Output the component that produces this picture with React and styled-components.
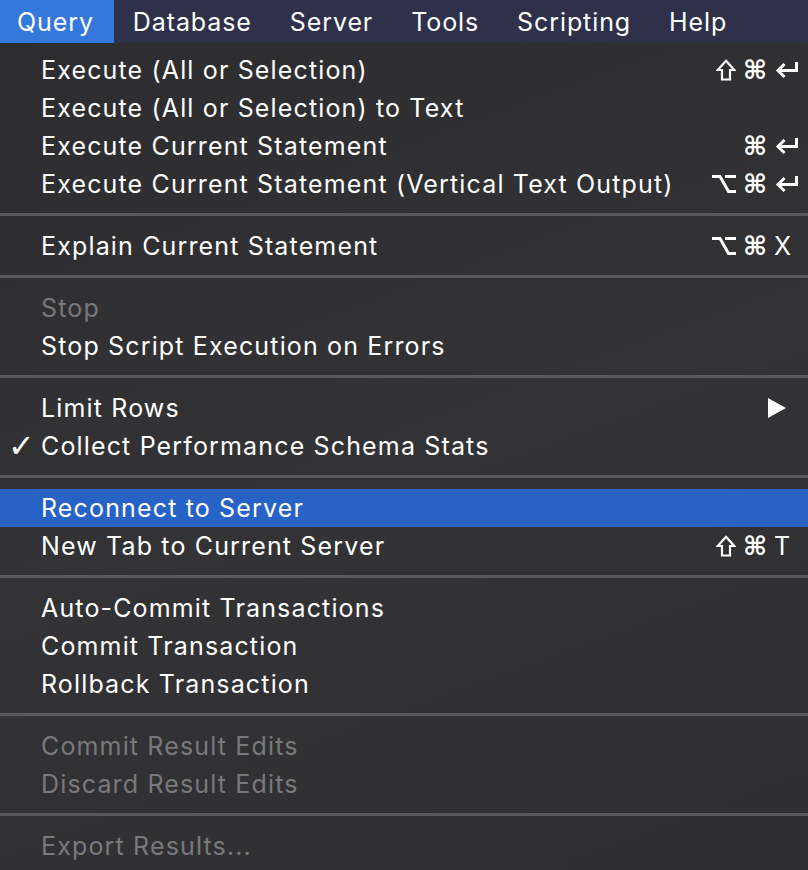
import React from "react";
import styled, { createGlobalStyle } from "styled-components";

const GlobalStyle = createGlobalStyle`
  html, body {
    margin: 0;
    padding: 0;
    background: #303032;
  }
  body {
    font-family: Inter, "Noto Sans", sans-serif;
    -webkit-font-smoothing: antialiased;
  }
`;

const topMenus = ["Query", "Database", "Server", "Tools", "Scripting", "Help"];

const groups = [
  [
    { label: "Execute (All or Selection)", keys: ["shift", "⌘", "ret"] },
    { label: "Execute (All or Selection) to Text" },
    { label: "Execute Current Statement", keys: ["⌘", "ret"] },
    { label: "Execute Current Statement (Vertical Text Output)", keys: ["opt", "⌘", "ret"] },
  ],
  [{ label: "Explain Current Statement", keys: ["opt", "⌘", "X"] }],
  [{ label: "Stop", disabled: true }, { label: "Stop Script Execution on Errors" }],
  [{ label: "Limit Rows", submenu: true }, { label: "Collect Performance Schema Stats", checked: true }],
  [{ label: "Reconnect to Server", active: true }, { label: "New Tab to Current Server", keys: ["shift", "⌘", "T"] }],
  [{ label: "Auto-Commit Transactions" }, { label: "Commit Transaction" }, { label: "Rollback Transaction" }],
  [
    { label: "Commit Result Edits", disabled: true },
    { label: "Discard Result Edits", disabled: true },
  ],
  [{ label: "Export Results...", disabled: true }],
];

const ShiftIcon = () => (
  <svg width="20" height="22" viewBox="0 0 20 22" fill="none">
    <path d="M10 1.8L18.2 11H14V20.5H6V11H1.8Z" stroke="currentColor" strokeWidth="2.2" strokeLinejoin="miter" />
  </svg>
);

const OptionIcon = () => (
  <svg width="24" height="20" viewBox="0 0 24 20" fill="none">
    <path d="M0 2.5H8L16.5 17.5H24" stroke="currentColor" strokeWidth="3" />
    <path d="M13 2.5H24" stroke="currentColor" strokeWidth="3" />
  </svg>
);

const ReturnIcon = () => (
  <svg width="25" height="18" viewBox="0 0 25 18" fill="none">
    <path d="M22.5 1v8.5H4" stroke="currentColor" strokeWidth="3" />
    <path d="M10.5 3L4 9.5L10.5 16" stroke="currentColor" strokeWidth="3" />
  </svg>
);

const SubmenuArrow = () => (
  <svg width="18" height="20" viewBox="0 0 18 20">
    <path d="M0 0L18 10L0 20Z" fill="currentColor" />
  </svg>
);

const renderKey = (k, i) => {
  if (k === "ret") return <LastSlot key={i}><ReturnIcon /></LastSlot>;
  if (k === "shift") return <ShiftIcon key={i} />;
  if (k === "opt") return <OptionIcon key={i} />;
  if (k === "⌘") return <Cmd key={i}>⌘</Cmd>;
  return <LastSlot key={i}>{k}</LastSlot>;
};

const App = () => {
  return (
    <>
      <GlobalStyle />
      <Page>
        <MenuBar>
          {topMenus.map(name => (
            <TopItem key={name} $open={name === "Query"}>
              {name}
            </TopItem>
          ))}
        </MenuBar>

        <Dropdown>
          {groups.map((group, gi) => (
            <Group key={gi}>
              {gi > 0 && <Separator />}
              {group.map(item => (
                <Row key={item.label} $active={item.active} $disabled={item.disabled}>
                  <Check>{item.checked ? "✓" : ""}</Check>
                  <Label>{item.label}</Label>
                  {item.keys && <Shortcut>{item.keys.map(renderKey)}</Shortcut>}
                  {item.submenu && (
                    <Arrow>
                      <SubmenuArrow />
                    </Arrow>
                  )}
                </Row>
              ))}
            </Group>
          ))}
        </Dropdown>
      </Page>
    </>
  );
};

export default App;

const Page = styled.div`
  width: 808px;
  height: 870px;
  overflow: hidden;
  display: flex;
  flex-direction: column;
`;

const MenuBar = styled.div`
  height: 43px;
  flex-shrink: 0;
  display: flex;
  align-items: stretch;
  background-color: #2e3149;
`;

const TopItem = styled.div`
  display: flex;
  align-items: center;
  padding: 0 19px;
  font-size: 25px;
  letter-spacing: 0.9px;
  color: #ffffff;
  background-color: ${p => (p.$open ? "#3478dc" : "transparent")};

  &:first-child {
    padding: 0 20px 0 17px;
  }
`;

const Dropdown = styled.div`
  flex: 1;
  padding-top: 8px;
  background: linear-gradient(160deg, #2d2d2f 0%, #333335 50%, #2f2f31 100%);
`;

const Group = styled.div`
  display: flex;
  flex-direction: column;
`;

const Separator = styled.div`
  height: 3px;
  margin: 10px 0 11px;
  background-color: #59595b;
`;

const Row = styled.div`
  height: 38px;
  display: flex;
  align-items: center;
  padding-right: 9px;
  font-size: 25px;
  letter-spacing: 1.15px;
  color: ${p => (p.$disabled ? "#79797b" : "#ffffff")};
  background-color: ${p => (p.$active ? "#2762c6" : "transparent")};
`;

const Check = styled.span`
  width: 41px;
  flex-shrink: 0;
  padding-left: 8px;
  box-sizing: border-box;
  font-family: "DejaVu Sans", sans-serif;
  font-size: 32px;
  font-weight: bold;
  line-height: 1;
  letter-spacing: 0;
`;

const Label = styled.span`
  flex: 1;
  white-space: nowrap;
`;

const Shortcut = styled.span`
  display: flex;
  align-items: center;
  gap: 7px;
  color: #ffffff;
`;

const Cmd = styled.span`
  font-family: "DejaVu Sans", sans-serif;
  font-size: 26px;
  font-weight: bold;
  line-height: 1;
  letter-spacing: 0;
`;

const LastSlot = styled.span`
  width: 25px;
  display: flex;
  align-items: center;
  font-size: 25px;
  line-height: 1;
  letter-spacing: 0;
`;

const Arrow = styled.span`
  display: flex;
  margin-right: 13px;
  color: #ffffff;
`;
